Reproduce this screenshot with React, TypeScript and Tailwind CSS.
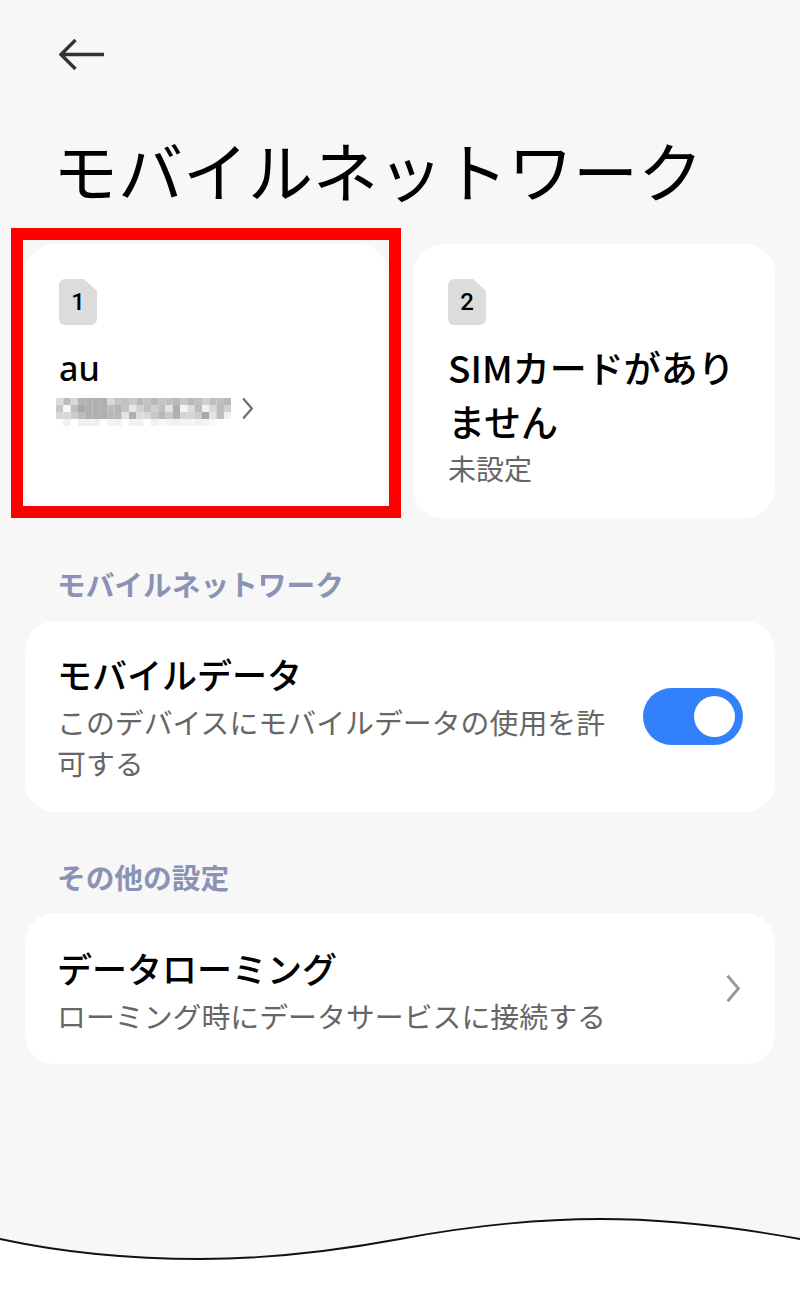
const jp = "font-['Noto_Sans_CJK_JP',sans-serif]"

const mosaic = [
  'dcbcd8b4b0b0b0d8c4c0ccb8c4b8c4c0b8c8b8c0d0c0c0b8',
  'c8f8c0a8b0b0b0bcb4c4e8d0c0d0c0e4b0f4dcbcf0d8bcd0',
  'd8d8ccbcb0b0b0b8b8e4b0dcd8c8b8c8b0d4d4cca8e4bcf0',
  'fff0fff0f0f0fff4f0fff0f0fff0f8f4f0f4f4f0f4f8ffff',
]

function Mosaic() {
  return (
    <svg width="175" height="28" viewBox="0 0 175 28" className="shrink-0">
      {mosaic.map((row, y) =>
        Array.from({ length: 24 }).map((_, x) => (
          <rect
            key={`${x}-${y}`}
            x={x * 7.3}
            y={y * 7}
            width="7.4"
            height="7"
            fill={`#${row.slice(x * 2, x * 2 + 2).repeat(3)}`}
          />
        )),
      )}
    </svg>
  )
}

function Chevron({ className }: { className: string }) {
  return (
    <svg viewBox="0 0 12 24" fill="none" className={className}>
      <path d="M1.5 1.5 L10.5 12 L1.5 22.5" stroke="currentColor" strokeWidth="2.4" />
    </svg>
  )
}

function SimIcon({ n }: { n: string }) {
  return (
    <div className="relative flex h-[46px] w-[38px] items-center justify-center">
      <svg viewBox="0 0 38 46" className="absolute inset-0 h-full w-full">
        <path
          d="M6 0 H25 L38 12 V40 a6 6 0 0 1 -6 6 H6 a6 6 0 0 1 -6 -6 V6 a6 6 0 0 1 6 -6 Z"
          fill="#dcdcdc"
        />
      </svg>
      <span className="relative font-['Roboto',sans-serif] text-[24px] leading-none font-medium text-black">
        {n}
      </span>
    </div>
  )
}

export default function App() {
  return (
    <div className={`${jp} relative h-[1300px] w-[800px] overflow-hidden bg-[#f7f7f7]`}>
      <div className="px-[59px] pt-[39px]">
        <svg width="46" height="32" viewBox="0 0 46 32" fill="none" className="text-[#333]">
          <path d="M45 15.5 H2 M16.5 1 L2 15.5 L16.5 30" stroke="currentColor" strokeWidth="3.4" />
        </svg>
      </div>

      <h1 className="mt-[53px] pl-[53px] text-[65px] leading-[90px] font-normal whitespace-nowrap text-black">
        モバイルネットワーク
      </h1>

      <div className="mt-[30px] mr-[25px] ml-[25px] flex gap-[25px]">
        <div className="h-[274px] w-[363px] rounded-[30px] bg-white px-[34px] pt-[35px]">
          <SimIcon n="1" />
          <div className="mt-[20px] font-['Noto_Sans',sans-serif] text-[34px] leading-[46px] font-medium text-black">
            au
          </div>
          <div className="mt-[7px] flex items-start gap-[10px]">
            <div className="-ml-[3px]">
              <Mosaic />
            </div>
            <Chevron className="-mt-[1px] h-[23px] w-[13px] text-[#707070]" />
          </div>
        </div>
        <div className="h-[274px] w-[362px] rounded-[30px] bg-white px-[35px] pt-[35px]">
          <SimIcon n="2" />
          <div className="mt-[15px] w-[292px] text-[37px] leading-[54px] font-medium text-black">
            SIMカードがありません
          </div>
          <div className="text-[28px] leading-[40px] text-[#666]">未設定</div>
        </div>
      </div>

      <div className="mt-[46px] pl-[57px] text-[28.7px] leading-[40px] font-bold text-[#8b93b5]">
        モバイルネットワーク
      </div>

      <div className="mx-[25px] mt-[17px] flex h-[191px] items-center justify-between rounded-[30px] bg-white pr-[32px] pl-[32px]">
        <div className="w-[556px]">
          <div className="text-[35px] leading-[48px] font-medium text-black">モバイルデータ</div>
          <div className="mt-[3px] text-[28.9px] leading-[41px] text-[#666]">
            このデバイスにモバイルデータの使用を許可する
          </div>
        </div>
        <div className="flex h-[57px] w-[100px] items-center justify-end rounded-full bg-[#3380fb] pr-[8px]">
          <div className="h-[41px] w-[41px] rounded-full bg-white" />
        </div>
      </div>

      <div className="mt-[45px] pl-[57px] text-[28.7px] leading-[40px] font-bold text-[#8b93b5]">
        その他の設定
      </div>

      <div className="mx-[25px] mt-[16px] flex h-[151px] items-center justify-between rounded-[30px] bg-white pr-[33px] pl-[32px]">
        <div className="pt-[4px]">
          <div className="text-[35px] leading-[49px] font-medium text-black">データローミング</div>
          <div className="text-[28.9px] leading-[46px] text-[#666]">
            ローミング時にデータサービスに接続する
          </div>
        </div>
        <Chevron className="h-[29px] w-[18px] text-[#999]" />
      </div>

      {/* torn edge at the bottom of the shot */}
      <svg
        viewBox="0 0 800 100"
        className="absolute bottom-0 left-0 h-[100px] w-[800px]"
        fill="none"
      >
        <path
          d="M0 39 C60 52 130 59 200 59 C270 59 335 51 400 39 C465 27 530 19 600 19 C670 19 740 28 800 39 V100 H0 Z"
          fill="#fff"
        />
        <path
          d="M0 39 C60 52 130 59 200 59 C270 59 335 51 400 39 C465 27 530 19 600 19 C670 19 740 28 800 39"
          stroke="#111"
          strokeWidth="1.8"
        />
      </svg>

      {/* red highlight drawn over the first SIM card */}
      <div className="absolute top-[228px] left-[11px] h-[290px] w-[390px] border-[12px] border-[#ff0000]" />
    </div>
  )
}
